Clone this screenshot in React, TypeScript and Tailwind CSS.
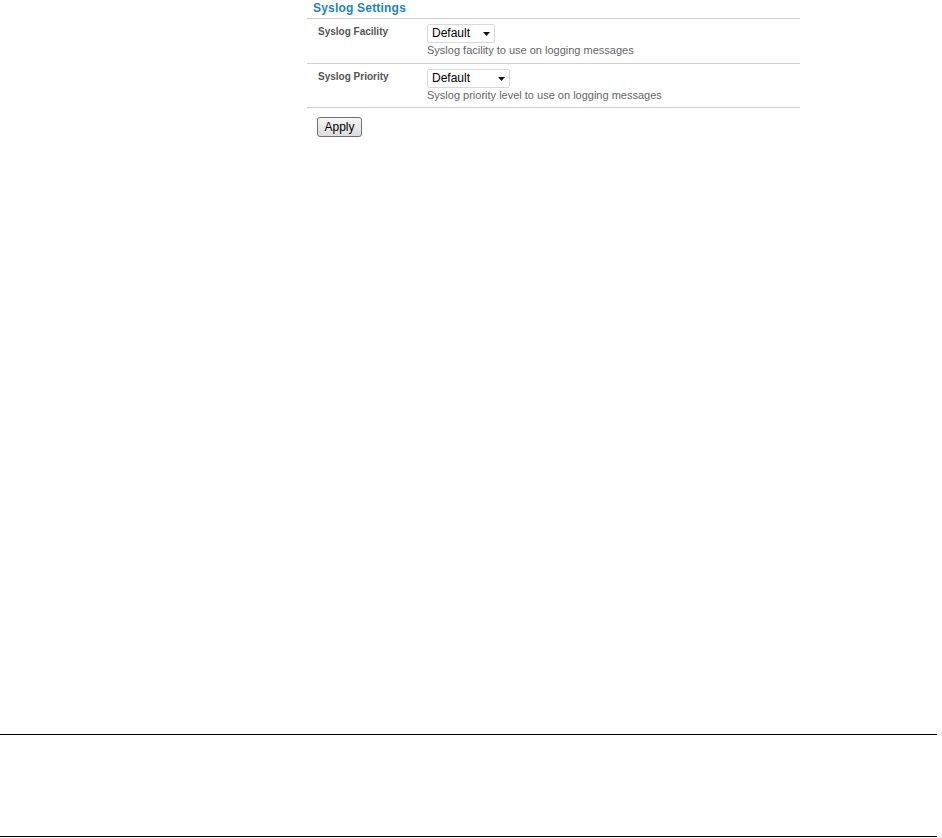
import { useState } from "react";

const font = { fontFamily: '"Liberation Sans", Arial, sans-serif' };

function Dropdown({ width }: { width: string }) {
  const [value, setValue] = useState("Default");
  return (
    <div className={`relative h-[19px] ${width}`}>
      <select
        value={value}
        onChange={(e) => setValue(e.target.value)}
        className="block h-full w-full appearance-none rounded-[2px] border border-[#d9d9d9] bg-white pl-[4px] text-[12px] leading-[17px] text-black outline-none"
        style={font}
      >
        <option>Default</option>
      </select>
      <svg className="pointer-events-none absolute right-[5px] top-[8px]" width="7" height="4" viewBox="0 0 7 4">
        <path d="M0 0h7L3.5 4z" fill="#111" />
      </svg>
    </div>
  );
}

function Row({ label, help, width, h }: { label: string; help: string; width: string; h: string }) {
  return (
    <div className={`flex border-b border-[#cfcfcf] ${h}`}>
      <div className="w-[120px] pl-[11px] pt-[6px] text-[10px] font-bold leading-[13px] text-[#555]">{label}</div>
      <div className="pt-[5px]">
        <Dropdown width={width} />
        <div className="mt-[1px] text-[11px] leading-[12px] text-[#666]">{help}</div>
      </div>
    </div>
  );
}

export default function App() {
  return (
    <div className="w-[942px] bg-white" style={font}>
      <div className="h-[734px] pl-[307px]">
        <div className="w-[493px]">
          <div className="h-[19px] border-b border-[#cfcfcf] pl-[6px] pt-[1px] text-[12px] font-bold leading-[15px] tracking-[0.2px] text-[#1a84c9]">
            Syslog Settings
          </div>
          <Row label="Syslog Facility" help="Syslog facility to use on logging messages" width="w-[68px]" h="h-[45px]" />
          <Row label="Syslog Priority" help="Syslog priority level to use on logging messages" width="w-[83px]" h="h-[44px]" />
          <div className="pl-[10px] pt-[9px]">
            <button
              type="button"
              className="block h-[20px] w-[45px] rounded-[3px] border border-[#707070] bg-gradient-to-b from-[#f6f6f6] to-[#dcdcdc] text-[12px] leading-[16px] text-black"
            >
              Apply
            </button>
          </div>
        </div>
      </div>
      <footer className="mr-[5px] h-[103px] border-y border-black" />
    </div>
  );
}
